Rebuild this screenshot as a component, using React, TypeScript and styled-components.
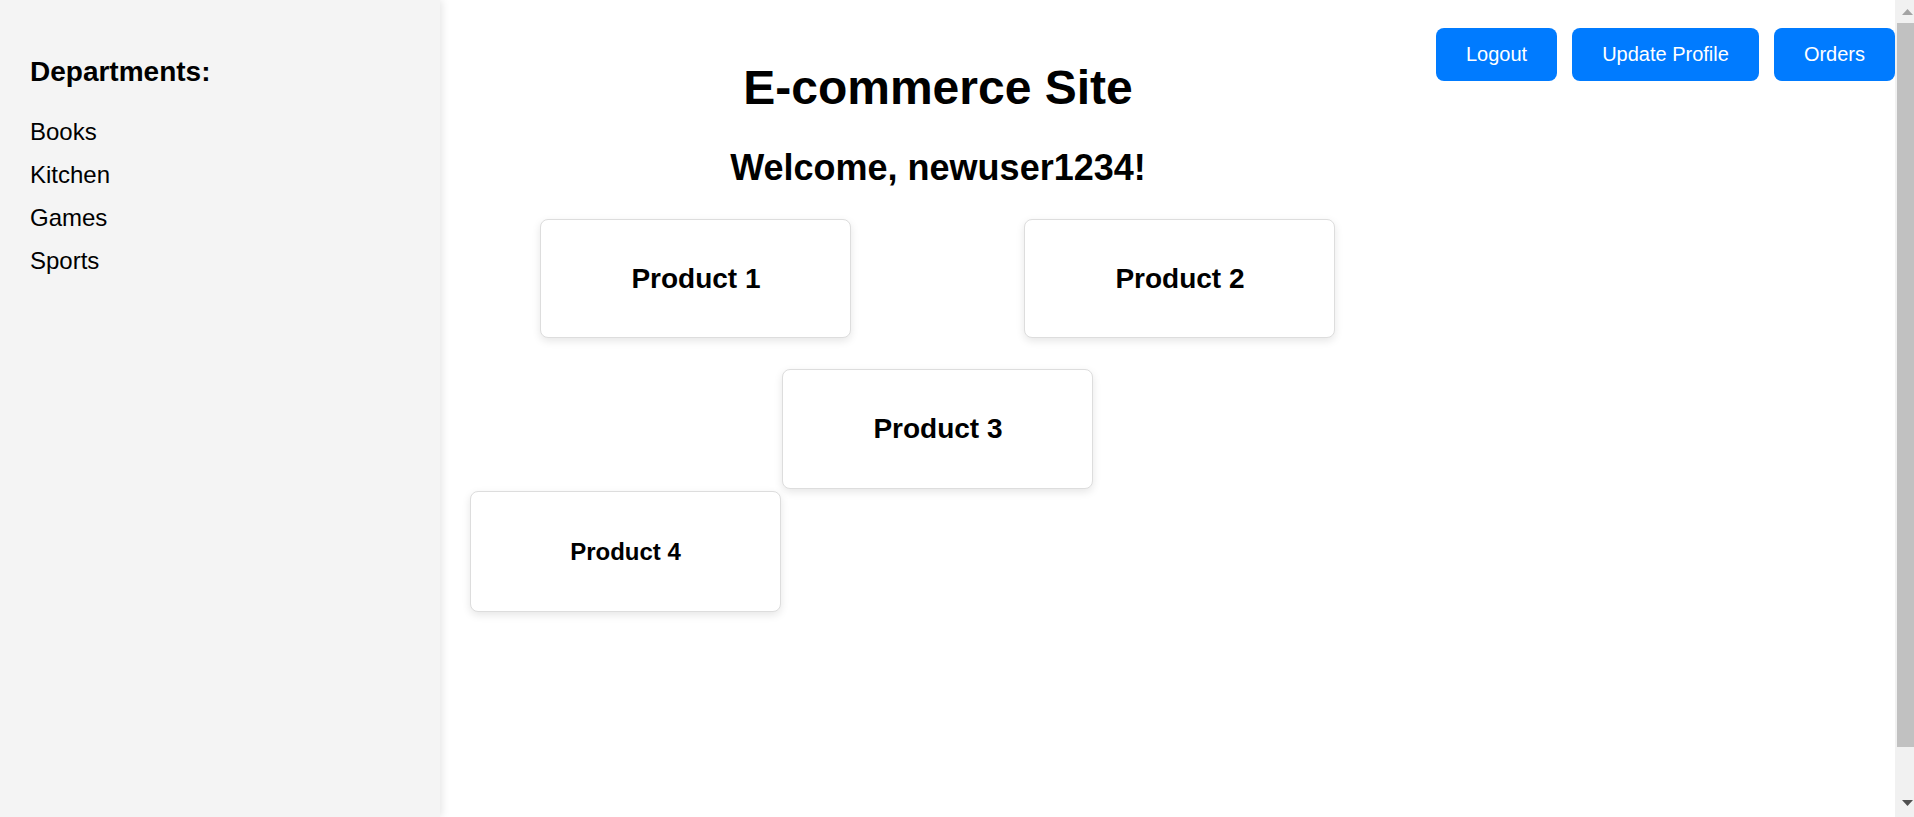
import React from "react";
import styled, { createGlobalStyle } from "styled-components";

const GlobalStyle = createGlobalStyle`
  html, body {
    margin: 0;
    padding: 0;
    background: #ffffff;
    font-family: "Liberation Sans", Arial, sans-serif;
    color: #000000;
    overflow: hidden;
  }
  * { box-sizing: border-box; }
`;

const Page = styled.div`
  display: flex;
  align-items: stretch;
  height: 100vh;
`;

const Sidebar = styled.aside`
  flex: 0 0 440px;
  width: 440px;
  height: 100vh;
  padding: 30px;
  background: #f4f4f4;
  box-shadow: 2px 0 8px rgba(0, 0, 0, 0.1);
  position: relative;
  z-index: 1;
`;

const SideTitle = styled.h3`
  margin: 26px 0 30px;
  font-size: 28px;
  line-height: 32px;
  font-weight: 700;
`;

const DeptList = styled.ul`
  list-style: none;
  margin: 0;
  padding: 0;
`;

const DeptItem = styled.li`
  font-size: 24px;
  line-height: 28px;
  margin-bottom: 15px;
  cursor: pointer;
`;

const Main = styled.main`
  flex: 1;
  min-width: 0;
  display: flex;
  align-items: flex-start;
  padding: 28px 0 0 30px;
`;

const Content = styled.section`
  flex: 1;
  margin-right: 30px;
  text-align: center;
`;

const Title = styled.h1`
  margin: 32px 0 32px;
  font-size: 48px;
  line-height: 55px;
  font-weight: 700;
`;

const Welcome = styled.h2`
  margin: 0 0 31px;
  font-size: 36px;
  line-height: 41px;
  font-weight: 700;
`;

const Products = styled.div`
  display: flex;
  flex-direction: column;
`;

const ProductRow = styled.div<{ $justify: string; $gap: number; $top: number }>`
  display: flex;
  justify-content: ${(p) => p.$justify};
  gap: ${(p) => p.$gap}px;
  margin-top: ${(p) => p.$top}px;
`;

const Card = styled.div<{ $height: number }>`
  width: 311px;
  height: ${(p) => p.$height}px;
  display: flex;
  align-items: center;
  justify-content: center;
  background: #ffffff;
  border: 1px solid #dddddd;
  border-radius: 8px;
  box-shadow: 0 3px 8px rgba(0, 0, 0, 0.1);
`;

const CardName = styled.h3<{ $size: number }>`
  margin: 0;
  font-size: ${(p) => p.$size}px;
  font-weight: 700;
`;

const Actions = styled.nav`
  display: flex;
  gap: 15px;
`;

const ActionButton = styled.button`
  padding: 15px 30px;
  border: none;
  border-radius: 8px;
  background: #007bff;
  color: #ffffff;
  font-family: "Liberation Sans", Arial, sans-serif;
  font-size: 20px;
  line-height: 23px;
  cursor: pointer;
  white-space: nowrap;
`;

const ScrollTrack = styled.div`
  flex: 0 0 19px;
  width: 19px;
  height: 100vh;
  background: #f1f1f1;
  display: flex;
  flex-direction: column;
`;

const ArrowBox = styled.div<{ $height: number; $align: string }>`
  height: ${(p) => p.$height}px;
  display: flex;
  align-items: ${(p) => p.$align};
  padding-left: 7px;
`;

const Thumb = styled.div`
  height: 724px;
  margin-left: 2px;
  background: #c1c1c1;
`;

const TrackRest = styled.div`
  flex: 1;
`;

const Arrow = ({ up, color }: { up?: boolean; color: string }) => (
  <svg width="11" height="6" viewBox="0 0 11 6" style={{ display: "block" }}>
    <polygon points={up ? "0,6 5.5,0 11,6" : "0,0 11,0 5.5,6"} fill={color} />
  </svg>
);

const departments = ["Books", "Kitchen", "Games", "Sports"];

export default function App() {
  return (
    <>
      <GlobalStyle />
      <Page>
        <Sidebar>
          <SideTitle>Departments:</SideTitle>
          <DeptList>
            {departments.map((d) => (
              <DeptItem key={d}>{d}</DeptItem>
            ))}
          </DeptList>
        </Sidebar>
        <Main>
          <Content>
            <Title>E-commerce Site</Title>
            <Welcome>Welcome, newuser1234!</Welcome>
            <Products>
              <ProductRow $justify="center" $gap={173} $top={0}>
                <Card $height={119}>
                  <CardName $size={28}>Product 1</CardName>
                </Card>
                <Card $height={119}>
                  <CardName $size={28}>Product 2</CardName>
                </Card>
              </ProductRow>
              <ProductRow $justify="center" $gap={0} $top={31}>
                <Card $height={120}>
                  <CardName $size={28}>Product 3</CardName>
                </Card>
              </ProductRow>
              <ProductRow $justify="flex-start" $gap={0} $top={2}>
                <Card $height={121}>
                  <CardName $size={24}>Product 4</CardName>
                </Card>
              </ProductRow>
            </Products>
          </Content>
          <Actions>
            <ActionButton>Logout</ActionButton>
            <ActionButton>Update Profile</ActionButton>
            <ActionButton>Orders</ActionButton>
          </Actions>
        </Main>
        <ScrollTrack aria-hidden="true">
          <ArrowBox $height={23} $align="center">
            <Arrow up color="#a3a3a3" />
          </ArrowBox>
          <Thumb />
          <TrackRest />
          <ArrowBox $height={17} $align="flex-start">
            <Arrow color="#505050" />
          </ArrowBox>
        </ScrollTrack>
      </Page>
    </>
  );
}
